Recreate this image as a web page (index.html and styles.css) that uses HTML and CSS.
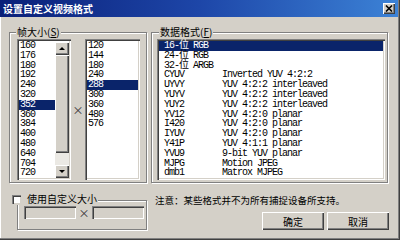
FILE: index.html
```html
<!DOCTYPE html>
<html lang="zh-CN">
<head>
  <meta charset="UTF-8">
  <title>设置自定义视频格式</title>
  <link rel="stylesheet" href="styles.css">
</head>
<body>
  <div class="dialog">
    <div class="titlebar">
      <span class="title">设置自定义视频格式</span>
      <span class="close-btn">
        <svg width="8" height="7" viewBox="0 0 8 7"><path d="M1 0.5 L7 6.5 M7 0.5 L1 6.5" stroke="#000" stroke-width="1.6"/></svg>
      </span>
    </div>

    <div class="body">
      <!-- left column: frame size -->
      <div class="col-left">
        <div class="group size-group">
          <div class="group-label">帧大小(<u>S</u>)</div>
          <div class="size-lists">
            <div class="listbox list-w">
              <div class="items">
                <div class="item">160</div>
                <div class="item">176</div>
                <div class="item">180</div>
                <div class="item">192</div>
                <div class="item">240</div>
                <div class="item">320</div>
                <div class="item selected">352</div>
                <div class="item">360</div>
                <div class="item">384</div>
                <div class="item">400</div>
                <div class="item">480</div>
                <div class="item">640</div>
                <div class="item">704</div>
                <div class="item">720</div>
              </div>
              <div class="scrollbar">
                <div class="sb-btn"><span class="arrow-up"></span></div>
                <div class="sb-thumb"></div>
                <div class="sb-track"></div>
                <div class="sb-btn"><span class="arrow-down"></span></div>
              </div>
            </div>
            <span class="times">×</span>
            <div class="listbox list-h">
              <div class="items">
                <div class="item">120</div>
                <div class="item">144</div>
                <div class="item">180</div>
                <div class="item">240</div>
                <div class="item selected">288</div>
                <div class="item">300</div>
                <div class="item">360</div>
                <div class="item">480</div>
                <div class="item">576</div>
              </div>
            </div>
          </div>
        </div>

        <div class="group custom-group">
          <div class="group-label check-label"><span class="checkbox"></span>使用自定义大小</div>
          <div class="custom-row">
            <span class="edit"></span>
            <span class="times">×</span>
            <span class="edit"></span>
          </div>
        </div>
      </div>

      <!-- right column: data format -->
      <div class="col-right">
        <div class="group format-group">
          <div class="group-label">数据格式(<u>F</u>)</div>
          <div class="listbox formats">
            <div class="items">
              <div class="fmt selected"><span>16-位 RGB</span><span></span></div>
              <div class="fmt"><span>24-位 RGB</span><span></span></div>
              <div class="fmt"><span>32-位 ARGB</span><span></span></div>
              <div class="fmt"><span>CYUV</span><span>Inverted YUV 4:2:2</span></div>
              <div class="fmt"><span>UYVY</span><span>YUV 4:2:2 interleaved</span></div>
              <div class="fmt"><span>YUYV</span><span>YUV 4:2:2 interleaved</span></div>
              <div class="fmt"><span>YUY2</span><span>YUV 4:2:2 interleaved</span></div>
              <div class="fmt"><span>YV12</span><span>YUV 4:2:0 planar</span></div>
              <div class="fmt"><span>I420</span><span>YUV 4:2:0 planar</span></div>
              <div class="fmt"><span>IYUV</span><span>YUV 4:2:0 planar</span></div>
              <div class="fmt"><span>Y41P</span><span>YUV 4:1:1 planar</span></div>
              <div class="fmt"><span>YVU9</span><span>9-bit YUV planar</span></div>
              <div class="fmt"><span>MJPG</span><span>Motion JPEG</span></div>
              <div class="fmt"><span>dmb1</span><span>Matrox MJPEG</span></div>
            </div>
          </div>
        </div>
        <p class="note">注意：某些格式并不为所有捕捉设备所支持。</p>
        <div class="buttons">
          <button type="button" class="btn">确定</button>
          <button type="button" class="btn">取消</button>
        </div>
      </div>
    </div>
  </div>
</body>
</html>
```

FILE: styles.css
```css
body {
  margin: 0;
  font-family: "Noto Sans CJK SC", sans-serif;
  font-size: 10px;
  color: #000;
}

/* window frame */
.dialog {
  width: 400px;
  height: 240px;
  box-sizing: border-box;
  padding: 0 2px 3px 0;
  background-color: #d4d0c8;
  box-shadow: inset -1px -1px 0 #404040, inset -2px -2px 0 #808080, inset 1px 0 0 #fff;
}

.titlebar {
  height: 17px;
  display: flex;
  align-items: center;
  justify-content: space-between;
  padding: 0 3px 0 3px;
  background: linear-gradient(to right, #0a1f78, #1d46a8 50%, #3c82d6);
}

.title {
  color: #fff;
  font-weight: 700;
  font-size: 10px;
  line-height: 17px;
}

.close-btn {
  width: 12px;
  height: 11px;
  display: flex;
  align-items: center;
  justify-content: center;
  background-color: #d4d0c8;
  box-shadow: inset 1px 1px 0 #fff, inset -1px -1px 0 #404040, inset -2px -2px 0 #808080;
}

.body {
  display: flex;
  gap: 4px;
  padding: 15px 0 0 9px;
}

.col-left {
  width: 138px;
}

.col-right {
  width: 237px;
}

/* etched group box */
.group {
  border: 1px solid #808080;
  box-shadow: inset 1px 1px 0 #fff, 1px 1px 0 #fff;
}

.group-label {
  width: fit-content;
  margin-top: -7px;
  padding: 0 1px;
  line-height: 12px;
  background-color: #d4d0c8;
  font-size: 10px;
}

.size-group {
  padding: 0 0 2px 7px;
}

.size-group .group-label {
  margin-left: -1px;
}

.size-lists {
  display: flex;
  align-items: center;
  margin-top: 1px;
}

.times {
  width: 14px;
  text-align: center;
  font-size: 11px;
  color: #333;
  line-height: 12px;
}

/* sunken list boxes */
.listbox {
  display: flex;
  height: 141px;
  box-sizing: border-box;
  padding: 2px;
  background-color: #fff;
  box-shadow: inset 1px 1px 0 #808080, inset 2px 2px 0 #404040, inset -1px -1px 0 #fff, inset -2px -2px 0 #d4d0c8;
  font-family: "Liberation Mono", "Noto Sans CJK SC", monospace;
  font-size: 10px;
  letter-spacing: -1px;
}

.items {
  flex: 1;
}

.item {
  height: 9.8px;
  line-height: 9.8px;
  padding-left: 1px;
  white-space: nowrap;
}

.selected {
  background-color: #0a246a;
  color: #fff;
}

.list-w {
  width: 54px;
}

.list-h {
  width: 55px;
}

.scrollbar {
  width: 14px;
  display: flex;
  flex-direction: column;
  padding-top: 1px;
}

.sb-btn,
.sb-thumb {
  background-color: #d4d0c8;
  box-shadow: inset 1px 1px 0 #fff, inset -1px -1px 0 #404040, inset -2px -2px 0 #808080;
}

.sb-btn {
  height: 13px;
  display: flex;
  align-items: center;
  justify-content: center;
}

.sb-thumb {
  height: 98px;
}

.sb-track {
  flex: 1;
  background-color: #ebe9e4;
}

.arrow-up {
  border-left: 3px solid transparent;
  border-right: 3px solid transparent;
  border-bottom: 3px solid #000;
}

.arrow-down {
  border-left: 3px solid transparent;
  border-right: 3px solid transparent;
  border-top: 3px solid #000;
}

/* custom size group */
.custom-group {
  margin: 17px 0 0 8px;
  padding: 0 0 10px 6px;
}

.check-label {
  display: flex;
  align-items: center;
  gap: 6px;
  margin: -8px 0 0 -13px;
}

.checkbox {
  width: 9px;
  height: 9px;
  background-color: #fff;
  box-shadow: inset 1px 1px 0 #808080, inset 2px 2px 0 #404040, inset -1px -1px 0 #d4d0c8;
}

.custom-row {
  display: flex;
  align-items: center;
  gap: 1px;
  margin-top: 1px;
}

.edit {
  width: 52px;
  height: 13px;
  background-color: #d4d0c8;
  box-shadow: inset 1px 1px 0 #808080, inset 2px 2px 0 #404040, inset -1px -1px 0 #fff, inset -2px -2px 0 #d4d0c8;
}

.custom-row .times {
  width: 14px;
}

/* data format group */
.format-group {
  padding: 0 2px 2px 5px;
}

.format-group .group-label {
  margin-left: 2px;
}

.formats {
  margin-top: 1px;
}

.fmt {
  display: grid;
  grid-template-columns: 58px 1fr;
  height: 9.8px;
  line-height: 9.8px;
  padding-left: 5px;
  white-space: nowrap;
}

.note {
  margin: 11px 0 0 4px;
  font-size: 9.5px;
  line-height: 12px;
}

.buttons {
  display: flex;
  justify-content: flex-end;
  gap: 3px;
  margin: 6px -1px 0 0;
}

.btn {
  width: 62px;
  height: 18px;
  padding: 0;
  border: none;
  background-color: #d4d0c8;
  box-shadow: inset 1px 1px 0 #fff, inset -1px -1px 0 #404040, inset -2px -2px 0 #808080;
  font-family: "Noto Sans CJK SC", sans-serif;
  font-size: 10px;
  color: #000;
}
```
